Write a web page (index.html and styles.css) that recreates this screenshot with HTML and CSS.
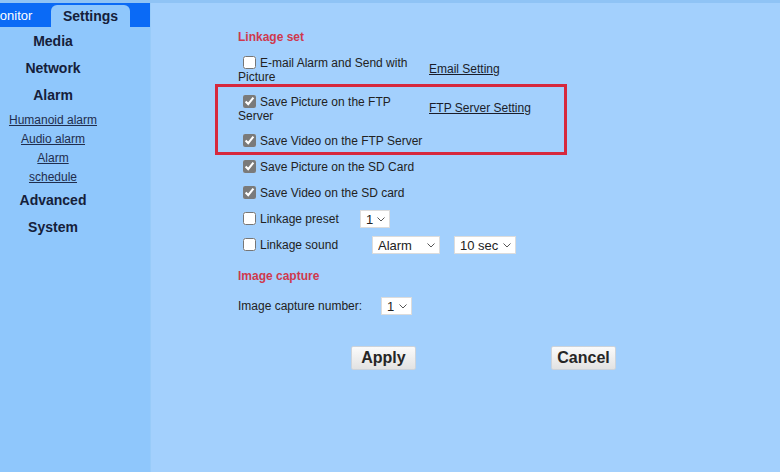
FILE: index.html
```html
<!DOCTYPE html>
<html>
<head>
<meta charset="utf-8">
<link rel="stylesheet" href="styles.css">
</head>
<body>
<div class="page">
  <aside class="side">
    <div class="tabs">
      <div class="tab tab-monitor">Monitor</div>
      <div class="tab tab-active">Settings</div>
    </div>
    <nav class="nav">
      <div class="nav-h">Media</div>
      <div class="nav-h">Network</div>
      <div class="nav-h">Alarm</div>
      <div class="nav-sub">
        <a href="#">Humanoid alarm</a>
        <a href="#">Audio alarm</a>
        <a href="#">Alarm<br>schedule</a>
      </div>
      <div class="nav-h">Advanced</div>
      <div class="nav-h">System</div>
    </nav>
  </aside>
  <main class="main">
    <div class="section-title">Linkage set</div>
    <div class="row row-2 row-first">
      <label class="cell"><input type="checkbox" class="cb">E-mail Alarm and Send with Picture</label>
      <a href="#" class="link">Email Setting</a>
    </div>
    <div class="highlight">
      <div class="row row-2">
        <label class="cell"><input type="checkbox" class="cb" checked>Save Picture on the FTP Server</label>
        <a href="#" class="link">FTP Server Setting</a>
      </div>
      <div class="row row-last">
        <label class="cell"><input type="checkbox" class="cb" checked>Save Video on the FTP Server</label>
      </div>
    </div>
    <div class="row">
      <label class="cell"><input type="checkbox" class="cb" checked>Save Picture on the SD Card</label>
    </div>
    <div class="row">
      <label class="cell"><input type="checkbox" class="cb" checked>Save Video on the SD card</label>
    </div>
    <div class="row">
      <label class="lbl lbl-preset"><input type="checkbox" class="cb">Linkage preset</label>
      <span class="sel sel-1"><select><option>1</option></select><svg class="chev" viewBox="0 0 8 5" width="8" height="5"><path d="M0.5 0.5 L4 4 L7.5 0.5" fill="none" stroke="#555" stroke-width="1"/></svg></span>
    </div>
    <div class="row">
      <label class="lbl lbl-sound"><input type="checkbox" class="cb">Linkage sound</label>
      <span class="sel sel-alarm"><select><option>Alarm</option></select><svg class="chev" viewBox="0 0 8 5" width="8" height="5"><path d="M0.5 0.5 L4 4 L7.5 0.5" fill="none" stroke="#555" stroke-width="1"/></svg></span>
      <span class="sel sel-sec"><select><option>10 sec</option></select><svg class="chev" viewBox="0 0 8 5" width="8" height="5"><path d="M0.5 0.5 L4 4 L7.5 0.5" fill="none" stroke="#555" stroke-width="1"/></svg></span>
    </div>
    <div class="section-title title-capture">Image capture</div>
    <div class="row row-capture">
      <span class="lbl lbl-capture">Image capture number:</span>
      <span class="sel sel-cap"><select><option>1</option></select><svg class="chev" viewBox="0 0 8 5" width="8" height="5"><path d="M0.5 0.5 L4 4 L7.5 0.5" fill="none" stroke="#555" stroke-width="1"/></svg></span>
    </div>
    <div class="buttons">
      <button class="btn">Apply</button>
      <button class="btn">Cancel</button>
    </div>
  </main>
</div>
</body>
</html>
```

FILE: styles.css
```css
* { box-sizing: border-box; }
html, body { margin: 0; padding: 0; }
body {
  font-family: "Liberation Sans", Arial, sans-serif;
  color: #222;
  background: #a3d0fd;
  overflow: hidden;
}
.page {
  display: flex;
  height: 472px;
  border-top: 3px solid #8fc3f5;
}
.side {
  width: 151px;
  flex: 0 0 151px;
  background: #8fc7fc;
  border-right: 1px solid #98cbf9;
}
.tabs {
  display: flex;
  height: 24px;
  background: #0a6af6;
  overflow: hidden;
}
.tab-monitor {
  flex: 0 0 51px;
  padding-top: 2px;
  color: #fff;
  font-size: 13px;
  line-height: 22px;
  text-indent: -11px;
  white-space: nowrap;
}
.tab-active {
  flex: 0 0 79px;
  margin-top: 2px;
  height: 22px;
  border-radius: 6px 6px 0 0;
  background: #8fc7fc;
  font-weight: bold;
  font-size: 14px;
  line-height: 22px;
  text-align: center;
  color: #15203a;
}
.nav {
  width: 106px;
  padding-top: 1px;
  text-align: center;
}
.nav-h {
  font-weight: bold;
  font-size: 14px;
  line-height: 27px;
  color: #15203a;
}
.nav-sub {
  margin-top: 2px;
}
.nav-sub a {
  display: block;
  font-size: 12px;
  line-height: 19px;
  color: #1f2d4d;
  text-decoration: underline;
}
.main {
  flex: 1;
  background: #a3d0fd;
  padding-left: 87px;
  font-size: 12px;
}
.section-title {
  margin-top: 27px;
  font-weight: bold;
  font-size: 12px;
  line-height: 14px;
  color: #cf394d;
}
.title-capture {
  margin-top: 11px;
}
.row {
  display: flex;
  align-items: center;
  height: 26px;
  line-height: 14px;
}
.row-2 {
  height: 40px;
}
.row-first {
  margin-top: 6px;
}
.row-last {
  height: 23px;
}
.cell {
  width: 185px;
  flex: 0 0 185px;
}
.cb {
  width: 13px;
  height: 13px;
  margin: 0 4px 0 5px;
  vertical-align: -2px;
  accent-color: #7a7a7a;
}
.link {
  margin-left: 6px;
  margin-bottom: 3px;
  color: #1a1d2a;
  text-decoration: underline;
  white-space: nowrap;
}
.highlight {
  width: 352px;
  margin: -6px 0 -1px -23px;
  padding: 2px 0 0 20px;
  border: 3px solid #d6283d;
}
.lbl { flex: 0 0 auto; white-space: nowrap; }
.lbl-preset { width: 122px; }
.lbl-sound { width: 134px; }
.lbl-capture { width: 143px; }
.sel {
  position: relative;
  display: inline-block;
  height: 18px;
}
.sel select {
  -webkit-appearance: none;
  appearance: none;
  height: 18px;
  border: 1px solid #dcdcdc;
  border-radius: 0;
  background: #fff;
  font-family: "Liberation Sans", Arial, sans-serif;
  font-size: 13px;
  color: #222;
  padding: 0 0 0 5px;
  margin: 0;
  outline: none;
  display: block;
}
.sel .chev {
  position: absolute;
  top: 7px;
  right: 5px;
  pointer-events: none;
}
.sel-1 select { width: 30px; }
.sel-alarm select { width: 68px; }
.sel-sec { margin-left: 14px; }
.sel-sec select { width: 62px; }
.sel-cap select { width: 31px; }
.row-capture {
  margin-top: 10px;
}
.buttons {
  display: flex;
  gap: 135px;
  margin-top: 27px;
  margin-left: 113px;
}
.btn {
  width: 65px;
  height: 24px;
  padding: 0;
  border: 1px solid #cdd3da;
  border-radius: 2px;
  background: linear-gradient(#fbfbfb, #e2e2e2);
  font-family: "Liberation Sans", Arial, sans-serif;
  font-weight: bold;
  font-size: 16px;
  color: #262626;
}
```
